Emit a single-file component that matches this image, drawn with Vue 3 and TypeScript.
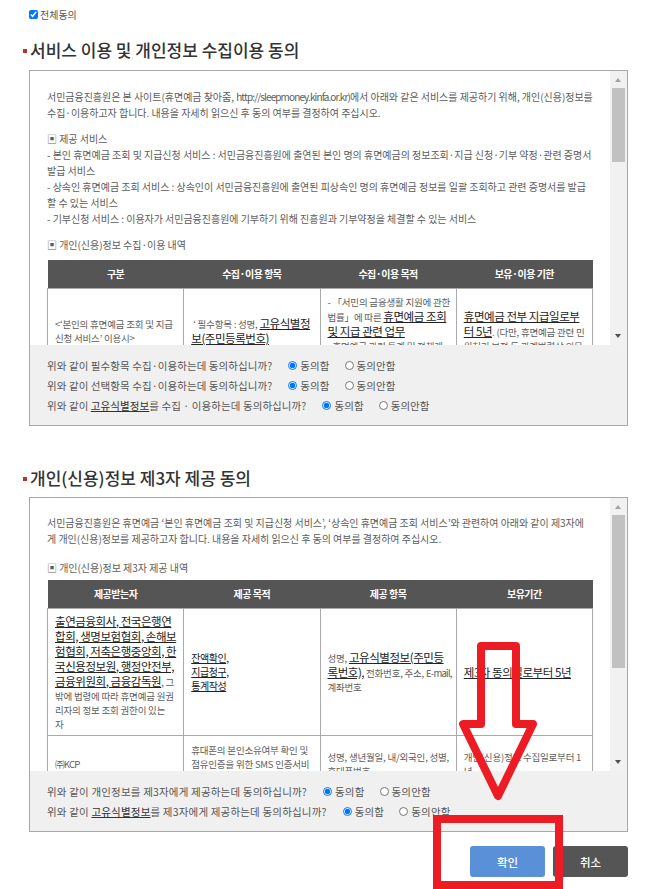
<script setup lang="ts">
interface Question { before: string; strong?: string; after: string; name: string }
const firstQuestions: Question[] = [
  { before: '위와 같이 필수항목 수집·이용하는데 동의하십니까?', after: '', name: 'a1' },
  { before: '위와 같이 선택항목 수집·이용하는데 동의하십니까?', after: '', name: 'a2' },
  { before: '위와 같이 ', strong: '고유식별정보', after: '를 수집 · 이용하는데 동의하십니까?', name: 'a3' },
]
const secondQuestions: Question[] = [
  { before: '위와 같이 개인정보를 제3자에게 제공하는데 동의하십니까?', after: '', name: 'b1' },
  { before: '위와 같이 ', strong: '고유식별정보', after: '를 제3자에게 제공하는데 동의하십니까?', name: 'b2' },
]
</script>

<template>
  <div class="page">
    <label class="all"><input type="checkbox" checked />전체동의</label>

    <h2 class="title first">서비스 이용 및 개인정보 수집이용 동의</h2>
    <section class="box box-one">
      <div class="view">
        <div class="content">
          <p>서민금융진흥원은 본 사이트(휴면예금 찾아줌, <span class="latin">http://sleepmoney.kinfa.or.kr)</span>에서 아래와 같은 서비스를 제공하기 위해, 개인(신용)정보를<br />수집·이용하고자 합니다. 내용을 자세히 읽으신 후 동의 여부를 결정하여 주십시오.</p>
          <p>▣ 제공 서비스<br />- 본인 휴면예금 조회 및 지급신청 서비스 : 서민금융진흥원에 출연된 본인 명의 휴면예금의 정보조회·지급 신청·기부 약정·관련 증명서<br />발급 서비스<br />- 상속인 휴면예금 조회 서비스 : 상속인이 서민금융진흥원에 출연된 피상속인 명의 휴면예금 정보를 일괄 조회하고 관련 증명서를 발급<br />할 수 있는 서비스<br />- 기부신청 서비스 : 이용자가 서민금융진흥원에 기부하기 위해 진흥원과 기부약정을 체결할 수 있는 서비스</p>
          <p class="caption">▣ 개인(신용)정보 수집·이용 내역</p>
          <table class="grid">
            <thead>
              <tr><th>구분</th><th>수집·이용 항목</th><th>수집·이용 목적</th><th>보유·이용 기한</th></tr>
            </thead>
            <tbody>
              <tr class="row-a">
                <td>&lt;‘본인의 휴면예금 조회 및 지급<br />신청 서비스’ 이용시&gt;</td>
                <td>&nbsp;‘ 필수항목 : 성명, <u>고유식별정</u><br /><u>보(주민등록번호)</u></td>
                <td>- 「서민의 금융생활 지원에 관한<br />법률」에 따른 <u>휴면예금 조회</u><br /><u>및 지급 관련 업무</u><br />- 휴면예금 관련 통계 및 정책개<br />발 업무</td>
                <td><u>휴면예금 전부 지급일로부</u><br /><u>터 5년</u>. (다만, 휴면예금 관련 민<br />원처리 보전 등 관계법령상 의무</td>
              </tr>
            </tbody>
          </table>
        </div>
        <div class="bar"><i class="up"></i><b class="thumb thumb-one"></b><i class="down"></i></div>
      </div>
      <div class="foot foot-one">
        <div v-for="q in firstQuestions" :key="q.name" class="ask">
          <span class="q">{{ q.before }}<u v-if="q.strong">{{ q.strong }}</u>{{ q.after }}</span>
          <label class="opt"><input type="radio" :name="q.name" checked />동의함</label>
          <label class="opt"><input type="radio" :name="q.name" />동의안함</label>
        </div>
      </div>
    </section>

    <h2 class="title second">개인(신용)정보 제3자 제공 동의</h2>
    <section class="box box-two">
      <div class="view">
        <div class="content">
          <p>서민금융진흥원은 휴면예금 ‘본인 휴면예금 조회 및 지급신청 서비스’, ‘상속인 휴면예금 조회 서비스’와 관련하여 아래와 같이 제3자에<br />게 개인(신용)정보를 제공하고자 합니다. 내용을 자세히 읽으신 후 동의 여부를 결정하여 주십시오.</p>
          <p class="caption">▣ 개인(신용)정보 제3자 제공 내역</p>
          <table class="grid">
            <thead>
              <tr><th>제공받는자</th><th>제공 목적</th><th>제공 항목</th><th>보유기간</th></tr>
            </thead>
            <tbody>
              <tr class="row-b">
                <td><u>출연금융회사, 전국은행연</u><br /><u>합회, 생명보험협회, 손해보</u><br /><u>험협회, 저축은행중앙회, 한</u><br /><u>국신용정보원, 행정안전부,</u><br /><u>금융위원회, 금융감독원</u>, 그<br /><small>밖에 법령에 따라 휴면예금 원권<br />리자의 정보 조회 권한이 있는<br />자</small></td>
                <td><u class="mid">잔액확인,<br />지급청구,<br />통계작성</u></td>
                <td>성명, <u>고유식별정보(주민등</u><br /><u>록번호),</u> 전화번호, 주소, <span class="latin">E-mail,</span><br />계좌번호</td>
                <td><u>제3자 동의일로부터 5년</u></td>
              </tr>
              <tr class="row-c">
                <td><span class="latin">㈜KCP</span></td>
                <td>휴대폰의 본인소유여부 확인 및<br />점유인증을 위한 SMS 인증서비<br />스</td>
                <td>성명, 생년월일, 내/외국인, 성별,<br />휴대폰번호</td>
                <td>개인(신용)정보 수집일로부터 1<br />년</td>
              </tr>
            </tbody>
          </table>
        </div>
        <div class="bar"><i class="up"></i><b class="thumb thumb-two"></b><i class="down"></i></div>
      </div>
      <div class="foot foot-two">
        <div v-for="q in secondQuestions" :key="q.name" class="ask">
          <span class="q">{{ q.before }}<u v-if="q.strong">{{ q.strong }}</u>{{ q.after }}</span>
          <label class="opt"><input type="radio" :name="q.name" checked />동의함</label>
          <label class="opt"><input type="radio" :name="q.name" />동의안함</label>
        </div>
      </div>
    </section>

    <div class="actions">
      <button class="btn ok" type="button">확인</button>
      <button class="btn cancel" type="button">취소</button>
    </div>

    <svg class="marks" width="652" height="889" viewBox="0 0 652 889" aria-hidden="true">
      <path d="M481 646H516V724H533L498 796L463 724H481Z" fill="none" stroke="#ed1c24" stroke-width="8" stroke-linejoin="round" />
      <rect x="437" y="819" width="122" height="66" fill="none" stroke="#ed1c24" stroke-width="8" />
    </svg>
  </div>
</template>

<style>
html, body { margin: 0; background: #fff; }
</style>

<style scoped>
.page {
  position: relative;
  width: 652px;
  height: 889px;
  overflow: hidden;
  box-sizing: border-box;
  padding: 0 24px 0 29px;
  font-family: "Noto Sans CJK KR", "Noto Sans", sans-serif;
  color: #5c5c5c;
  font-size: 10px;
}
.all {
  display: flex;
  align-items: center;
  height: 14px;
  padding-top: 7px;
  font-size: 10px;
  color: #555;
}
.all input {
  width: 9px;
  height: 9px;
  margin: 0 2px 0 0;
  accent-color: #0075ff;
}
.title {
  position: relative;
  margin: 0;
  font-size: 17px;
  line-height: 22px;
  font-weight: 500;
  color: #333;
  height: 22px;
  padding-left: 1px;
}
.title::before {
  content: "";
  position: absolute;
  left: -6px;
  top: 10px;
  width: 4px;
  height: 4px;
  background: #b5322f;
}
.title.first { margin-top: 18px; }
.title.second { margin-top: 41px; }
.box {
  box-sizing: border-box;
  border: 1px solid #a8a8a8;
  background: #fff;
}
.box-one { height: 356px; margin-top: 9px; }
.box-two { height: 335px; margin-top: 8px; }
.view {
  display: flex;
  overflow: hidden;
}
.box-one .view { height: 274px; }
.box-two .view { height: 273px; }
.content {
  flex: 1;
  min-width: 0;
  padding: 18px 17px 0 17px;
  white-space: nowrap;
  line-height: 16px;
  letter-spacing: -0.03px;
  overflow: hidden;
}
.latin { letter-spacing: -0.88px; }
.grid .latin { letter-spacing: -0.75px; }
.box-two .content { padding-top: 17px; }
.content p { margin: 0 0 10px; }
.caption { margin-bottom: 7px !important; }
.box-two .content p:first-child { margin-bottom: 13px; }
.box-two .caption { margin-bottom: 4px !important; }
.grid {
  width: 546px;
  border-collapse: collapse;
  table-layout: fixed;
  line-height: 14px;
}
.grid th {
  height: 28px;
  padding: 0;
  background: #555;
  color: #fff;
  font-size: 10px;
  font-weight: 700;
  letter-spacing: -0.5px;
  text-align: center;
  border: 0;
  border-bottom: 1px solid #aaa;
}
.grid td {
  padding: 0 0 0 7px;
  border: 1px solid #aaa;
  vertical-align: middle;
  font-size: 9.5px;
  letter-spacing: -0.2px;
  overflow: hidden;
}
.grid u {
  font-size: 11.5px;
  color: #222;
  letter-spacing: -0.45px;
  line-height: 14px;
}
.grid u.mid { font-size: 10px; line-height: 14px; }
.grid small { font-size: 9.5px; }
.row-a td { height: 84px; }
.row-b td { height: 126px; }
.row-c td { height: 56px; }
.bar {
  flex: none;
  width: 17px;
  background: #f1f1f1;
  position: relative;
}
.thumb {
  display: block;
  width: 13px;
  background: #c1c1c1;
  position: absolute;
  left: 2px;
}
.thumb-one { top: 17px; height: 74px; }
.thumb-two { top: 17px; height: 153px; }
.up, .down {
  position: absolute;
  left: 5px;
  width: 0;
  height: 0;
  border-left: 3.5px solid transparent;
  border-right: 3.5px solid transparent;
}
.up { top: 7px; border-bottom: 4px solid #a3a3a3; }
.down { bottom: 7px; border-top: 4px solid #505050; }
.foot {
  background: #f0f0f0;
  box-sizing: border-box;
  padding-left: 17px;
}
.foot-one { height: 80px; padding-top: 11px; }
.foot-two { height: 60px; padding-top: 11px; }
.ask {
  display: flex;
  align-items: center;
  height: 19.7px;
  font-size: 10.5px;
  letter-spacing: 0.08px;
  white-space: nowrap;
  color: #555;
}
.foot-two .ask { letter-spacing: 0.18px; }
.q u { color: #333; }
.opt {
  display: flex;
  align-items: center;
  margin-left: 16px;
}
.opt + .opt { margin-left: 15px; }
.opt input {
  width: 9px;
  height: 9px;
  margin: 0 3px 0 0;
  accent-color: #0075ff;
}
.actions {
  display: flex;
  justify-content: flex-end;
  gap: 8px;
  margin-top: 14px;
}
.btn {
  width: 75px;
  height: 31px;
  border: 0;
  border-radius: 3px;
  color: #fff;
  font-family: inherit;
  font-size: 11.5px;
  font-weight: 500;
  padding: 0;
}
.ok { background: #5a90d8; }
.cancel { background: #555; }
.marks {
  position: absolute;
  left: 0;
  top: 0;
  pointer-events: none;
}
</style>
